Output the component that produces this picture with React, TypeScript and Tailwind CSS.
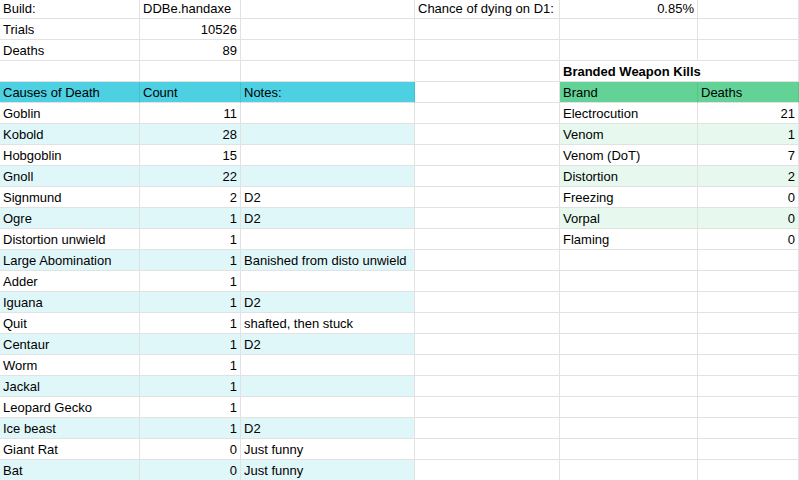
import React from "react";

type Cell = { text?: string; right?: boolean; bold?: boolean; bg?: string; edge?: string };

const cols = ["w-[140px]", "w-[101px]", "w-[174px]", "w-[145px]", "w-[138px]", "flex-1"];

const causes: [string, string, string][] = [
  ["Goblin", "11", ""],
  ["Kobold", "28", ""],
  ["Hobgoblin", "15", ""],
  ["Gnoll", "22", ""],
  ["Signmund", "2", "D2"],
  ["Ogre", "1", "D2"],
  ["Distortion unwield", "1", ""],
  ["Large Abomination", "1", "Banished from disto unwield"],
  ["Adder", "1", ""],
  ["Iguana", "1", "D2"],
  ["Quit", "1", "shafted, then stuck"],
  ["Centaur", "1", "D2"],
  ["Worm", "1", ""],
  ["Jackal", "1", ""],
  ["Leopard Gecko", "1", ""],
  ["Ice beast", "1", "D2"],
  ["Giant Rat", "0", "Just funny"],
  ["Bat", "0", "Just funny"],
];

const brands: [string, string][] = [
  ["Electrocution", "21"],
  ["Venom", "1"],
  ["Venom (DoT)", "7"],
  ["Distortion", "2"],
  ["Freezing", "0"],
  ["Vorpal", "0"],
  ["Flaming", "0"],
];

function Row({ cells, first }: { cells: Cell[]; first?: boolean }) {
  return (
    <div className={`flex h-[21px] ${first ? "-mt-[2px]" : ""}`}>
      {cols.map((w, i) => {
        const c = cells[i] || {};
        return (
          <div
            key={i}
            className={`${w} shrink-0 h-[21px] border-b border-r border-[#e2e2e2] px-[3px] leading-[21px] whitespace-nowrap overflow-visible ${c.right ? "text-right" : ""} ${c.bold ? "font-bold" : ""} ${c.bg || "bg-white"} ${c.edge || ""}`}
          >
            {c.text}
          </div>
        );
      })}
    </div>
  );
}

export default function App() {
  const rows: Cell[][] = [
    [{ text: "Build:" }, { text: "DDBe.handaxe" }, {}, { text: "Chance of dying on D1:" }, { text: "0.85%", right: true }, {}],
    [{ text: "Trials" }, { text: "10526", right: true }],
    [{ text: "Deaths" }, { text: "89", right: true }],
    [
      {},
      {},
      {},
      {},
      { text: "Branded Weapon Kills", bold: true, edge: "relative z-10 border-r-transparent" },
      { bg: "bg-transparent" },
    ],
    [
      { text: "Causes of Death", bg: "bg-[#4dd0e1]", edge: "border-r-[#46bfcf]" },
      { text: "Count", bg: "bg-[#4dd0e1]", edge: "border-r-[#46bfcf]" },
      { text: "Notes:", bg: "bg-[#4dd0e1]", edge: "border-r-[#46bfcf]" },
      {},
      { text: "Brand", bg: "bg-[#63d297]", edge: "border-r-[#5bc28b]" },
      { text: "Deaths", bg: "bg-[#63d297]", edge: "border-r-[#5bc28b]" },
    ],
  ];

  causes.forEach((c, i) => {
    const cy = i % 2 === 1 ? "bg-[#e0f7fa]" : "bg-white";
    const b = brands[i];
    const gr = i % 2 === 1 ? "bg-[#e7f9ef]" : "bg-white";
    rows.push([
      { text: c[0], bg: cy },
      { text: c[1], right: true, bg: cy },
      { text: c[2], bg: cy },
      {},
      b ? { text: b[0], bg: gr } : {},
      b ? { text: b[1], right: true, bg: gr } : {},
    ]);
  });

  return (
    <div className="w-[799px] h-[480px] overflow-hidden bg-white text-[13px] text-black font-['Liberation_Sans',Arial,sans-serif]">
      {rows.map((r, i) => (
        <Row key={i} cells={r} first={i === 0} />
      ))}
    </div>
  );
}
